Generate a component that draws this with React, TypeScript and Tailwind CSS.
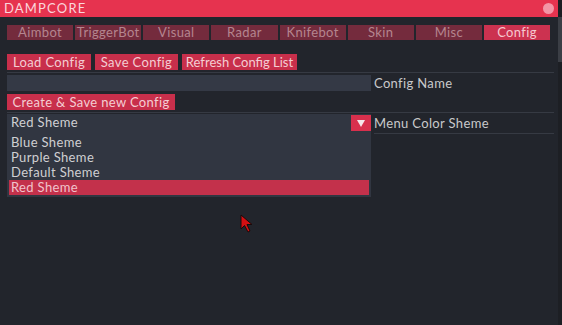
import React from "react";

const tabs = ["Aimbot", "TriggerBot", "Visual", "Radar", "Knifebot", "Skin", "Misc", "Config"];

function Btn({ children, w }: { children: React.ReactNode; w: string }) {
  return (
    <div className={`${w} h-[16px] bg-[#c82f4b] text-[#f4cdd3] text-[13px] leading-[16px] whitespace-nowrap text-center overflow-hidden`}>
      {children}
    </div>
  );
}

export default function App() {
  return (
    <div
      className="relative w-[562px] h-[325px] overflow-hidden bg-[#22252c] flex tracking-[0.35px]"
      style={{ fontFamily: "Lato, 'Open Sans', sans-serif" }}
    >
      <div className="flex-1 flex flex-col">
        <div className="h-[17px] bg-[#e6334f] flex items-center justify-between pl-[4px] pr-[4px]">
          <span className="text-[13px] leading-[17px] text-[#fbd6dc] tracking-[1.2px]">DAMPCORE</span>
          <div className="w-[11px] h-[11px] rounded-full bg-[#f395a6]" />
        </div>
        <div className="pl-[7px] pr-[4px] pt-[8px]">
          <div className="flex gap-[2px] h-[15px] mr-[4px]">
            {tabs.map((t) => (
              <div
                key={t}
                className={
                  t === "Config"
                    ? "flex-1 bg-[#cc3250] text-[#f6c8d0] text-[13px] leading-[15px] text-center"
                    : "flex-1 bg-[#742b3d] text-[#b5858f] text-[13px] leading-[15px] text-center"
                }
              >
                {t}
              </div>
            ))}
          </div>
          <div className="mt-[14px] flex gap-[4px]">
            <Btn w="w-[84px]">Load Config</Btn>
            <Btn w="w-[83px]">Save Config</Btn>
            <Btn w="w-[115px] tracking-[0px]">Refresh Config List</Btn>
          </div>
          <div className="mt-[2px] h-px bg-[#363a43]" />
          <div className="mt-[2px] flex items-center gap-[3px]">
            <div className="w-[364px] h-[16px] bg-[#343945]" />
            <span className="text-[13px] leading-[16px] text-[#c9c9cb]">Config Name</span>
          </div>
          <div className="mt-[3px] flex">
            <Btn w="w-[168px]">Create &amp; Save new Config</Btn>
          </div>
          <div className="mt-[2px] h-px bg-[#363a43]" />
          <div className="mt-[1px] flex items-start gap-[3px]">
            <div className="w-[364px] h-[83px] bg-[#313641] flex flex-col">
              <div className="h-[18px] flex items-center justify-between pl-[4px] pr-0">
                <span className="text-[13px] text-[#d0d0d3]">Red Sheme</span>
                <div className="w-[20px] h-[16px] bg-[#d8304d] flex items-center justify-center">
                  <svg width="8" height="7" viewBox="0 0 8 7">
                    <polygon points="0,0 8,0 4,7" fill="#f6e6ea" />
                  </svg>
                </div>
              </div>
              <div className="mt-[3px] flex flex-col">
                <div className="h-[15px] pl-[4px] text-[13px] leading-[15px] text-[#cfcfd2]">Blue Sheme</div>
                <div className="h-[15px] pl-[4px] text-[13px] leading-[15px] text-[#cfcfd2]">Purple Sheme</div>
                <div className="h-[15px] pl-[4px] text-[13px] leading-[15px] text-[#cfcfd2]">Default Sheme</div>
                <div className="mx-[2px] h-[15px] pl-[2px] bg-[#c3314b] text-[13px] leading-[15px] text-[#f1c3cb]">Red Sheme</div>
              </div>
            </div>
            <div className="flex-1 flex flex-col">
              <div className="h-[19px] flex items-center">
                <span className="text-[13px] text-[#c9c9cb]">Menu Color Sheme</span>
              </div>
              <div className="h-px bg-[#363a43]" />
            </div>
          </div>
        </div>
      </div>
      <div className="w-[4px] flex flex-col">
        <div className="h-[17px] bg-[#1c1e23]" />
        <div className="h-[45px] bg-[#3b3e45]" />
        <div className="flex-1 bg-[#1d1f24]" />
      </div>
      <svg className="absolute left-[240px] top-[214px]" width="14" height="20" viewBox="0 0 14 20">
        <polygon points="1,1 1,15 4.5,11.5 8,18 10,17 7,10.5 12,10.5" fill="#d40f12" stroke="#1a0a0a" strokeWidth="1" />
      </svg>
    </div>
  );
}
